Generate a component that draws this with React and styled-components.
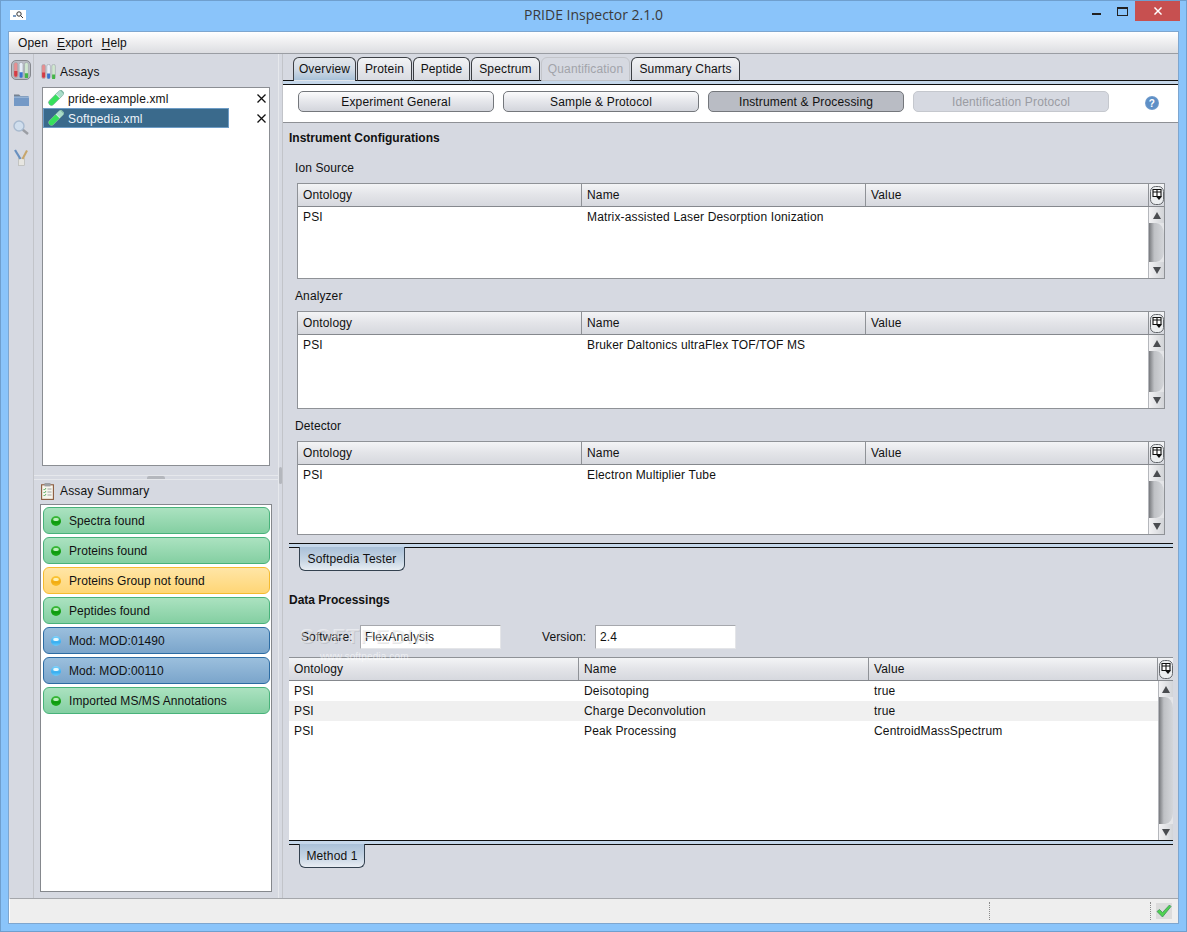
import React from 'react';
import styled, { createGlobalStyle } from 'styled-components';

const Global = createGlobalStyle`
  html, body { margin: 0; padding: 0; background: #8ac4fa; }
  body { font-family: "Liberation Sans", Arial, sans-serif; font-size: 12px; color: #111; letter-spacing: .15px; }
  * { box-sizing: border-box; }
`;

const Win = styled.div`
  width: 1187px; height: 932px; display: flex; flex-direction: column;
  background: #8ac4fa; border: 1px solid #6f9fce; overflow: hidden;
`;
const TitleBar = styled.header`
  height: 30px; flex: none; display: grid; grid-template-columns: 1fr auto 1fr;
`;
const AppIcon = styled.div`
  width: 16px; height: 10px; margin: 9px 0 0 9px; background: #fff; display: flex; align-items: center; justify-content: center;
`;
const Title = styled.div`
  font-family: "Open Sans", sans-serif; font-size: 14px; color: #3a3a3a; line-height: 28px; letter-spacing: 0;
`;
const Controls = styled.div`
  display: flex; justify-content: flex-end; padding-right: 6px; height: 20px;
`;
const Ctl = styled.div`
  width: ${p => p.$w}px; height: 20px; display: flex; align-items: center; justify-content: center;
  background: ${p => p.$close ? '#c75050' : 'transparent'};
`;
const Frame = styled.div`
  flex: 1; min-height: 0; margin: 0 7px 7px; border: 1px solid #7ea6cf; background: #d6d9e1;
  display: flex; flex-direction: column;
`;
const MenuBar = styled.nav`
  height: 22px; flex: none; display: flex; align-items: center; gap: 9px; padding-left: 9px;
  background: linear-gradient(#ffffff, #f6f6f7 25%, #dcdde1); border-bottom: 1px solid #9a9da3;
`;
const MenuItem = styled.span`
  u { text-decoration-thickness: 1px; text-underline-offset: 2px; }
`;
const Main = styled.div`
  flex: 1; min-height: 0; display: flex;
`;
const Rail = styled.aside`
  width: 25px; flex: none; border-right: 1px solid #c2c4c9; display: flex; flex-direction: column; align-items: center;
  padding-top: 6px; gap: 9px;
`;
const RailBtn = styled.div`
  width: 20px; height: 20px; display: flex; align-items: center; justify-content: center; border-radius: 5px;
  border: ${p => p.$on ? '1px solid #85888e' : '1px solid transparent'};
  background: ${p => p.$on ? '#b9bcc4' : 'transparent'};
  opacity: ${p => p.$on ? 1 : .8};
`;
const LeftCol = styled.div`
  width: 244px; flex: none; display: flex; flex-direction: column;
`;
const AssayPane = styled.section`
  height: 421px; flex: none; padding: 0 8px 9px; display: flex; flex-direction: column;
`;
const PaneHead = styled.h3`
  margin: 0; font-weight: 400; font-size: 12px; display: flex; align-items: center;
  gap: ${p => p.$gap}px; height: ${p => p.$h}px; margin-left: ${p => p.$ml || 0}px;
  padding-top: ${p => p.$pt || 0}px; padding-bottom: ${p => p.$pb || 0}px; flex: none;
`;
const AssayList = styled.div`
  flex: 1; background: #fff; border: 1px solid #8b8e93; display: flex; flex-direction: column;
`;
const AssayRow = styled.div`
  height: 20px; display: flex; align-items: center; padding-right: 3px;
`;
const AssayName = styled.div`
  width: 186px; height: 20px; display: flex; align-items: center; gap: 4px; padding: 1px 0 0 4px;
  background: ${p => p.$sel ? '#3a6a8c' : 'transparent'};
  color: ${p => p.$sel ? '#eef4f9' : '#111'};
  outline: ${p => p.$sel ? '1px solid #6d9cc6' : 'none'}; outline-offset: -1px;
`;
const Close = styled.div`
  margin-left: auto; width: 9px; height: 9px; display: flex;
`;
const HSplit = styled.div`
  height: 5px; flex: none; border-top: 1px solid #e6e8ec; border-bottom: 1px solid #e6e8ec;
  display: flex; justify-content: center;
  &::after { content: ""; width: 18px; height: 3px; background: #b4b7bd; border-radius: 2px 2px 0 0; }
`;
const SummaryPane = styled.section`
  flex: 1; padding: 0 6px 6px; display: flex; flex-direction: column;
`;
const SummaryBox = styled.div`
  flex: 1; background: #fff; border: 1px solid #85888d; padding: 2px 1px 0 2px;
  display: flex; flex-direction: column; gap: 3px;
`;
const tones = {
  green: {
    bg: 'linear-gradient(#abe2c0, #84cfa2)', bd: '#48b27a',
    led: 'radial-gradient(ellipse 3.5px 2px at 50% 35%, #b9eeb9 0 60%, transparent 100%), linear-gradient(#46be46, #0c9a0c 62%, #1fae1f)',
  },
  amber: {
    bg: 'linear-gradient(#ffe5a6, #ffd676)', bd: '#f5bb2e',
    led: 'radial-gradient(ellipse 3.5px 2px at 50% 35%, #fff0b0 0 60%, transparent 100%), linear-gradient(#fcc93e, #f2ab10 62%, #f9bf2a)',
  },
  blue: {
    bg: 'linear-gradient(#9bbfdd, #7ba5cb)', bd: '#2c6ca3',
    led: 'radial-gradient(ellipse 3.5px 2px at 50% 35%, #e6f9ff 0 60%, transparent 100%), linear-gradient(#7fd3fb, #38aef0 62%, #6ccbfa)',
  },
};
const Status = styled.div`
  height: 27px; flex: none; border: 1px solid ${p => tones[p.$tone].bd}; border-radius: 6px;
  background: ${p => tones[p.$tone].bg}; display: flex; align-items: center; padding-left: 7px; gap: 8px;
  letter-spacing: .07px;
`;
const Led = styled.span`
  width: 10px; height: 10px; flex: none; border-radius: 50%; background: ${p => tones[p.$tone].led};
`;
const VSplit = styled.div`
  width: 5px; flex: none; border-left: 1px solid #e6e8ec; border-right: 1px solid #c2c4c9;
  padding-top: 413px;
  &::after { content: ""; display: block; width: 3px; height: 17px; background: #b4b7bd; border-radius: 2px; }
`;
const Right = styled.div`
  flex: 1; min-width: 0; display: flex; flex-direction: column;
`;
const TabStrip = styled.div`
  height: 27px; flex: none; display: flex; align-items: flex-end; gap: 1px;
  padding-left: ${p => p.$pl}px; border-bottom: 1px solid #111;
`;
const Tab = styled.div`
  height: 24px; margin-bottom: -1px; width: ${p => p.$w}px; display: flex; align-items: center; justify-content: center;
  border: 1px solid ${p => p.$off ? '#c3c5ca' : '#3c3f44'}; border-bottom-color: ${p => p.$on ? 'transparent' : p.$off ? '#c3c5ca' : '#111'};
  border-radius: 6px 6px 0 0;
  background: ${p => p.$on ? 'linear-gradient(#e3e7ec, #d3dbe5 50%, #a9c2d9)' : p.$off ? '#d6d9e1' : 'linear-gradient(#f2f3f5, #d9dbe1)'};
  color: ${p => p.$off ? '#a2a4aa' : '#111'};
`;
const DoubleRule = styled.div`
  height: 4px; flex: none; background: #c5d7ea; border-bottom: 1px solid #111;
`;
const SubBar = styled.div`
  height: 38px; flex: none; background: #fff; border-bottom: 1px solid #8e9095;
  display: flex; align-items: flex-start; gap: 9px; padding: 6px 0 0 15px;
`;
const SubBtn = styled.div`
  width: 196px; height: 21px; display: flex; align-items: center; justify-content: center; border-radius: 5px;
  border: 1px solid ${p => p.$off ? '#c5c8ce' : '#74777c'};
  background: ${p => p.$on ? '#b9bcc4' : p.$off ? '#d6d9e1' : 'linear-gradient(#fbfbfc, #e9eaee 40%, #d3d5dc)'};
  color: ${p => p.$off ? '#9a9ca3' : '#111'};
`;
const HelpDot = styled.div`
  width: 14px; height: 14px; margin: 5px 0 0 27px; border-radius: 50%; background: radial-gradient(circle, #5e8fc6 55%, #a9c2de);
  color: #fff; font-weight: 700; font-size: 10px; display: flex; align-items: center; justify-content: center;
`;
const Pane = styled.div`
  flex: 1; min-height: 0; display: flex; flex-direction: column; padding: 0 5px 0 6px;
`;
const Bold = styled.h2`
  margin: 0; font-size: 12px; font-weight: 700; display: flex; align-items: center; flex: none; height: ${p => p.$h}px;
  padding-top: ${p => p.$pt || 0}px; letter-spacing: 0;
`;
const Label = styled.div`
  height: 32px; flex: none; padding: 10px 0 0 6px; line-height: 14px; letter-spacing: .1px;
`;
const Table = styled.div`
  height: ${p => p.$h}px; flex: none; margin: ${p => p.$m}; background: #fff; display: flex; flex-direction: column;
  border: 1px solid #8f9297; border-width: ${p => p.$flush ? '1px 0 0' : '1px'};
`;
const HeadRow = styled.div`
  height: ${p => p.$h}px; flex: none; display: grid; grid-template-columns: ${p => p.$cols};
  background: linear-gradient(#f3f4f6, #e3e4e8 50%, #d6d8de); border-bottom: 1px solid #85888d;
`;
const HeadCell = styled.div`
  display: flex; align-items: center; padding-left: 5px; border-right: 1px solid #8f9297;
`;
const Corner = styled.div`
  display: flex; align-items: center; justify-content: center;
`;
const TBody = styled.div`
  flex: 1; min-height: 0; display: flex;
`;
const Rows = styled.div`
  flex: 1; min-width: 0;
`;
const Row = styled.div`
  height: 20px; display: grid; grid-template-columns: ${p => p.$cols}; align-items: center;
  background: ${p => p.$alt ? '#f0f0f0' : '#fff'};
`;
const Cell = styled.div`
  padding-left: 5px; white-space: nowrap;
`;
const SBar = styled.div`
  width: ${p => p.$w}px; flex: none; display: flex; flex-direction: column; background: #e4e5e8;
  border-left: 1px solid #b5b7bc;
`;
const SBtn = styled.div`
  height: 16px; flex: none; display: flex; align-items: center; justify-content: center;
  background: linear-gradient(to right, #f2f2f4, #d2d4d8);
`;
const SThumb = styled.div`
  flex: 1; background: linear-gradient(to right, #77797d, #bfc1c5 35%, #d4d6da);
  border-radius: 0 8px 8px 0 / 0 11px 11px 0;
`;
const Arrow = styled.span`
  width: 0; height: 0; border-left: 4px solid transparent; border-right: 4px solid transparent;
  ${p => p.$down ? 'border-top: 7px solid #4a4c50;' : 'border-bottom: 7px solid #4a4c50;'}
`;
const Rule2 = styled.div`
  height: 5px; flex: none; margin-top: ${p => p.$mt}px; background: #c5d7ea; border: 1px solid #111; border-width: 1px 0;
`;
const LowerTab = styled.div`
  width: ${p => p.$w}px; height: 24px; flex: none; margin: -1px 0 0 10px; display: flex; align-items: center; justify-content: center;
  border: 1px solid #33414f; border-top: 0; border-radius: 0 0 6px 6px;
  background: linear-gradient(#a9c0d8, #c8d6e4 60%, #e8edf3);
`;
const FieldRow = styled.div`
  height: 24px; flex: none; margin-top: 12px; display: flex; align-items: center; padding-left: 12px; position: relative;
`;
const FieldLabel = styled.span`
  width: ${p => p.$w}px; flex: none; letter-spacing: .1px;
`;
const Field = styled.div`
  width: 141px; height: 24px; flex: none; margin-right: 41px; background: #fff; border: 1px solid #a6a8ad;
  border-right-color: #e4e5e8; border-bottom-color: #e4e5e8; padding-left: 4px; line-height: 22px;
`;
const Mark = styled.div`
  position: absolute; left: 11px; top: -1px; font-size: 21px; font-weight: 700; letter-spacing: 1px;
  color: rgba(255,255,255,.45); text-shadow: 1px 1px 0 rgba(0,0,0,.1); pointer-events: none; z-index: 2;
`;
const MarkUrl = styled.div`
  position: absolute; left: 31px; top: 26px; font-size: 10px; color: rgba(255,255,255,.55); z-index: 2; pointer-events: none;
`;
const StatusBar = styled.footer`
  height: 25px; flex: none; background: #eeeeee; border-top: 1px solid #a5a7ab; border-left: 1px solid #fff;
  display: flex; align-items: center; justify-content: flex-end;
`;
const Dots = styled.div`
  height: 18px; border-left: 1px dotted #8a8a8a; margin-right: ${p => p.$mr}px;
`;
const CheckBox = styled.div`
  width: 16px; height: 16px; background: #dcdcdc; margin-right: 6px; display: flex; align-items: center; justify-content: center;
`;

const Tube = () => (
  <svg width="17" height="17" viewBox="0 0 17 17">
    <g transform="rotate(45 8.5 8.5)">
      <rect x="5.6" y="-1.5" width="5.8" height="18.5" rx="2.9" fill="#cdeee0" stroke="#6d9c8e" strokeWidth=".7" />
      <rect x="5.9" y="-1.5" width="5.2" height="6" fill="#a8dcc8" />
      <path d="M5.9 5.5h5.2v8.8a2.6 2.6 0 0 1-5.2 0z" fill="#36e05c" />
      <rect x="4.4" y="-1.8" width="8.2" height="1.3" fill="#7fb5a3" />
    </g>
  </svg>
);
const Tubes = ({ s = 15 }) => (
  <svg width={s} height={s} viewBox="0 0 15 15">
    {[[.8, '#d33c44', '#e88e90', 8.5], [5.8, '#3a73cf', '#e6edf7', 9.5], [10.8, '#45b548', '#cfe7cf', 10.5]].map(([x, c, tint, y]) => (
      <g key={x}>
        <rect x={x} y=".4" width="3.6" height="14.2" rx="1.7" fill={tint} stroke="#9ea3aa" strokeWidth=".6" />
        <path d={`M${x + .3} ${y}h3v3.8a1.5 1.5 0 0 1-3 0z`} fill={c} />
      </g>
    ))}
  </svg>
);
const Folder = () => (
  <svg width="15" height="13" viewBox="0 0 15 13">
    <path d="M0 1.5h5l1.5 1.5H14v2H0z" fill="#5f6d7c" />
    <rect x="0" y="3.5" width="15" height="9.5" fill="#5c8ac0" />
    <rect x="0" y="3.5" width="15" height="1.5" fill="#86a9d2" />
  </svg>
);
const Search = () => (
  <svg width="16" height="16" viewBox="0 0 16 16">
    <line x1="9.5" y1="9.5" x2="15" y2="14" stroke="#8d9096" strokeWidth="2.4" />
    <circle cx="6" cy="6" r="5" fill="#cfe0f1" stroke="#9db3cc" strokeWidth="1.4" />
  </svg>
);
const Tools = () => (
  <svg width="15" height="17" viewBox="0 0 15 17">
    <rect x="4.5" y="9" width="6" height="7.5" fill="#eceae2" stroke="#a9a8a0" strokeWidth=".6" />
    <line x1="1" y1="1" x2="6.5" y2="10" stroke="#4d7fb8" strokeWidth="2.2" />
    <line x1="13" y1="1.5" x2="8.5" y2="10" stroke="#c49a4e" strokeWidth="2" />
  </svg>
);
const Clipboard = () => (
  <svg width="13" height="17" viewBox="0 0 13 17">
    <rect x=".6" y="1.8" width="11.8" height="14.6" fill="#f7f5ec" stroke="#8a5a3c" strokeWidth="1.1" />
    <rect x="3.5" y="0" width="6" height="3.4" fill="#9d9fa3" />
    <path d="M2.5 6l1 1 1.5-2M2.5 9l1 1 1.5-2M2.5 12l1 1 1.5-2" stroke="#3aa04a" fill="none" strokeWidth=".8" />
    <path d="M6.5 6h4M6.5 9h4M6.5 12h4" stroke="#8a8f95" strokeWidth=".8" />
  </svg>
);
const ColChooser = () => (
  <svg width="14" height="19" viewBox="0 0 14 19">
    <rect x=".5" y=".5" width="13" height="18" rx="5" fill="#eceef0" stroke="#63666b" />
    <path d="M3 3.5h8v7H3zM3 6h8M7 3.5v7" fill="#fff" stroke="#111" strokeWidth="1.1" />
    <path d="M6 10.5h6l-3 3.5z" fill="#111" />
  </svg>
);
const Check = () => (
  <svg width="16" height="14" viewBox="0 0 16 14">
    <path d="M1 7.5l2.5-2 3 3L13.5 1 15 2.5 6.5 13z" fill="#4fd24f" stroke="#3e8f5a" strokeWidth=".8" />
  </svg>
);
const X = ({ color = '#111', s = 9, w = 1.3 }) => (
  <svg width={s} height={s} viewBox="0 0 9 9"><path d="M.5.5l8 8M8.5.5l-8 8" stroke={color} strokeWidth={w} fill="none" /></svg>
);

const summary = [
  ['green', 'Spectra found'], ['green', 'Proteins found'], ['amber', 'Proteins Group not found'], ['green', 'Peptides found'],
  ['blue', 'Mod: MOD:01490'], ['blue', 'Mod: MOD:00110'], ['green', 'Imported MS/MS Annotations'],
];
const tabs = [
  ['Overview', 63, 'on'], ['Protein', 55], ['Peptide', 57], ['Spectrum', 69], ['Quantification', 89, 'off'], ['Summary Charts', 109],
];
const subs = [['Experiment General'], ['Sample & Protocol'], ['Instrument & Processing', 'on'], ['Identification Protocol', 'off']];

const SB = ({ w }) => (
  <SBar $w={w}>
    <SBtn><Arrow /></SBtn>
    <SThumb />
    <SBtn><Arrow $down /></SBtn>
  </SBar>
);

const InstrumentTable = ({ h, name }) => (
  <Table $h={h} $m="0 8px">
    <HeadRow $h={23} $cols="284px 284px 283px 1fr">
      <HeadCell>Ontology</HeadCell><HeadCell>Name</HeadCell><HeadCell>Value</HeadCell>
      <Corner><ColChooser /></Corner>
    </HeadRow>
    <TBody>
      <Rows>
        <Row $cols="284px 284px 283px"><Cell>PSI</Cell><Cell>{name}</Cell><Cell /></Row>
      </Rows>
      <SB w={16} />
    </TBody>
  </Table>
);

const procCols = '290px 290px 289px 1fr';
const procRowCols = '290px 290px 289px';
const proc = [['Deisotoping', 'true'], ['Charge Deconvolution', 'true'], ['Peak Processing', 'CentroidMassSpectrum']];

export default function App() {
  return (
    <Win>
      <Global />
      <TitleBar>
        <div>
          <AppIcon>
            <svg width="12" height="8" viewBox="0 0 12 8"><circle cx="7" cy="3" r="2.2" fill="none" stroke="#333" /><path d="M8.5 4.5L11 7" stroke="#333" /><path d="M1 5h3" stroke="#7a9ac0" strokeWidth="2" /></svg>
          </AppIcon>
        </div>
        <Title>PRIDE Inspector 2.1.0</Title>
        <Controls>
          <Ctl $w={26}><svg width="9" height="3" style={{ marginTop: 7 }}><rect width="9" height="2" fill="#222" /></svg></Ctl>
          <Ctl $w={26}><svg width="11" height="9"><rect x=".5" y=".5" width="10" height="8" fill="none" stroke="#222" /><rect width="11" height="2" fill="#222" /></svg></Ctl>
          <Ctl $w={45} $close><X color="#fff" s={8} w={1.6} /></Ctl>
        </Controls>
      </TitleBar>
      <Frame>
        <MenuBar>
          <MenuItem>Open</MenuItem>
          <MenuItem><u>E</u>xport</MenuItem>
          <MenuItem><u>H</u>elp</MenuItem>
        </MenuBar>
        <Main>
          <Rail>
            <RailBtn $on><Tubes s={16} /></RailBtn>
            <RailBtn><Folder /></RailBtn>
            <RailBtn><Search /></RailBtn>
            <RailBtn><Tools /></RailBtn>
          </Rail>
          <LeftCol>
            <AssayPane>
              <PaneHead $h={33} $pt={2} $gap={4} $ml={-1}><Tubes s={15} />Assays</PaneHead>
              <AssayList>
                <AssayRow><AssayName><Tube /> pride-example.xml</AssayName><Close><X /></Close></AssayRow>
                <AssayRow><AssayName $sel><Tube /> Softpedia.xml</AssayName><Close><X /></Close></AssayRow>
              </AssayList>
            </AssayPane>
            <HSplit />
            <SummaryPane>
              <PaneHead $h={24} $pb={2} $gap={6} $ml={1}><Clipboard />Assay Summary</PaneHead>
              <SummaryBox>
                {summary.map(([t, s]) => <Status key={s} $tone={t}><Led $tone={t} />{s}</Status>)}
              </SummaryBox>
            </SummaryPane>
          </LeftCol>
          <VSplit />
          <Right>
            <TabStrip $pl={10}>
              {tabs.map(([t, w, st]) => <Tab key={t} $w={w} $on={st === 'on'} $off={st === 'off'}>{t}</Tab>)}
            </TabStrip>
            <DoubleRule />
            <SubBar>
              {subs.map(([t, st]) => <SubBtn key={t} $on={st === 'on'} $off={st === 'off'}>{t}</SubBtn>)}
              <HelpDot>?</HelpDot>
            </SubBar>
            <Pane>
              <Bold $h={28} $pt={2}>Instrument Configurations</Bold>
              <Label>Ion Source</Label>
              <InstrumentTable h={96} name="Matrix-assisted Laser Desorption Ionization" />
              <Label>Analyzer</Label>
              <InstrumentTable h={98} name="Bruker Daltonics ultraFlex TOF/TOF MS" />
              <Label>Detector</Label>
              <InstrumentTable h={94} name="Electron Multiplier Tube" />
              <Rule2 $mt={8} />
              <LowerTab $w={106}>Softpedia Tester</LowerTab>
              <Bold $h={42} $pt={16}>Data Processings</Bold>
              <FieldRow>
                <Mark>SOFTPEDIA</Mark>
                <FieldLabel $w={59}>Software:</FieldLabel>
                <Field>FlexAnalysis</Field>
                <FieldLabel $w={53}>Version:</FieldLabel>
                <Field>2.4</Field>
                <MarkUrl>www.softpedia.com</MarkUrl>
              </FieldRow>
              <Table $h={183} $m="8px 0 0" $flush>
                <HeadRow $h={23} $cols={procCols}>
                  <HeadCell>Ontology</HeadCell><HeadCell>Name</HeadCell><HeadCell>Value</HeadCell>
                  <Corner><ColChooser /></Corner>
                </HeadRow>
                <TBody>
                  <Rows>
                    {proc.map(([n, v], i) => (
                      <Row key={n} $cols={procRowCols} $alt={i === 1}><Cell>PSI</Cell><Cell>{n}</Cell><Cell>{v}</Cell></Row>
                    ))}
                  </Rows>
                  <SB w={15} />
                </TBody>
              </Table>
              <Rule2 $mt={0} />
              <LowerTab $w={66}>Method 1</LowerTab>
            </Pane>
          </Right>
        </Main>
        <StatusBar>
          <Dots $mr={160} />
          <Dots $mr={5} />
          <CheckBox><Check /></CheckBox>
        </StatusBar>
      </Frame>
    </Win>
  );
}
